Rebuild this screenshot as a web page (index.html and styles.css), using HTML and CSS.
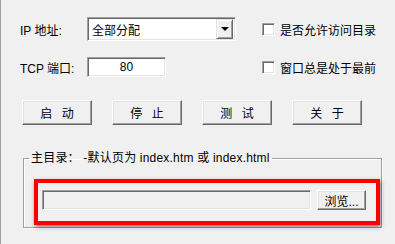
FILE: index.html
```html
<!DOCTYPE html>
<html lang="zh-CN">
<head>
  <meta charset="UTF-8" />
  <title>Web 服务器</title>
  <link rel="stylesheet" href="styles.css">
</head>
<body>
  <div class="form-grid">
    <label class="field-label">IP 地址:</label>
    <div class="combo">
      <span class="combo-text">全部分配</span>
      <span class="combo-btn"><span class="arrow"></span></span>
    </div>
    <label class="check"><span class="box"></span>是否允许访问目录</label>

    <label class="field-label">TCP 端口:</label>
    <div class="port-input">80</div>
    <label class="check"><span class="box"></span>窗口总是处于最前</label>
  </div>

  <div class="btn-row">
    <button class="win-btn">启 动</button>
    <button class="win-btn">停 止</button>
    <button class="win-btn">测 试</button>
    <button class="win-btn">关 于</button>
  </div>

  <fieldset class="group">
    <legend>主目录： -默认页为 index.htm 或 index.html</legend>
    <div class="highlight">
      <div class="path-input"></div>
      <button class="win-btn browse-btn">浏览...</button>
    </div>
  </fieldset>
</body>
</html>
```

FILE: styles.css
```css
body {
  margin: 0;
  height: 244px;
  box-sizing: border-box;
  border-left: 1px solid #a0a0a0;
  background: #f0f0f0;
  padding: 17px 0 0 19px;
  font-family: "Liberation Sans", "Noto Sans CJK SC", sans-serif;
  font-size: 12px;
  color: #000;
  overflow: hidden;
}
.form-grid {
  display: grid;
  grid-template-columns: 67px 149px auto;
  grid-template-rows: 24px 20px;
  row-gap: 16px;
  align-items: center;
}
.field-label {
  white-space: nowrap;
}
.combo, .port-input, .path-input, .box {
  box-sizing: border-box;
  background: #fff;
  border: 1px solid;
  border-color: #a0a0a0 #fff #fff #a0a0a0;
  box-shadow: inset 1px 1px 0 #696969, inset -1px -1px 0 #e3e3e3;
}
.combo {
  height: 24px;
  display: flex;
  align-items: center;
  padding: 2px;
}
.combo-text {
  flex: 1;
  padding-left: 2px;
}
.combo-btn {
  box-sizing: border-box;
  width: 17px;
  height: 20px;
  background: #f0f0f0;
  border: 1px solid;
  border-color: #e3e3e3 #696969 #696969 #e3e3e3;
  box-shadow: inset 1px 1px 0 #fff, inset -1px -1px 0 #a0a0a0;
  display: flex;
  align-items: center;
  justify-content: center;
}
.arrow {
  width: 0;
  height: 0;
  border-left: 4px solid transparent;
  border-right: 4px solid transparent;
  border-top: 4px solid #000;
}
.port-input {
  width: 79px;
  height: 20px;
  line-height: 18px;
  text-align: center;
}
.check {
  display: flex;
  align-items: center;
  gap: 5px;
  padding-left: 26px;
  white-space: nowrap;
}
.box {
  width: 13px;
  height: 13px;
}
.btn-row {
  display: flex;
  gap: 20px;
  margin: 23px 0 0 2px;
}
.win-btn {
  box-sizing: border-box;
  width: 70px;
  height: 25px;
  padding: 0;
  font: inherit;
  color: #000;
  word-spacing: 6px;
  background: #f0f0f0;
  border: 1px solid;
  border-color: #fff #696969 #696969 #fff;
  box-shadow: inset -1px -1px 0 #a0a0a0, inset 1px 1px 0 #e3e3e3;
}
.group {
  box-sizing: border-box;
  width: 359px;
  height: 77px;
  margin: 26px 0 0 3px;
  padding: 0;
  border: 1px solid #a0a0a0;
  box-shadow: 1px 1px 0 #fff, inset 1px 1px 0 #fff;
}
.group legend {
  margin-left: 5px;
  padding: 0 2px;
  line-height: 15px;
  letter-spacing: 0.2px;
}
.highlight {
  box-sizing: border-box;
  width: 346px;
  height: 46px;
  margin: 13px 0 0 10px;
  border: 4px solid #ff0000;
  box-shadow: 1px 2px 4px rgba(0, 0, 0, 0.5);
  display: flex;
  align-items: flex-start;
  gap: 6px;
  padding: 7px 0 0 4px;
}
.path-input {
  width: 269px;
  height: 20px;
  background: #f0f0f0;
}
.browse-btn {
  width: 49px;
  height: 20px;
  word-spacing: 0;
}
```
